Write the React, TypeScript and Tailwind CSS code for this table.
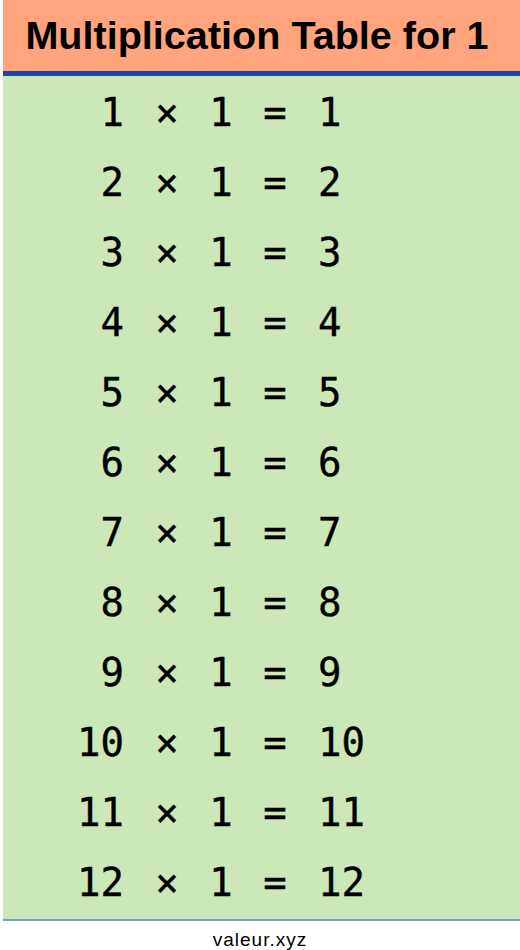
import React from 'react'

const rows = Array.from({ length: 12 }, (_, i) => i + 1)
const factor = 1

export default function App() {
  return (
    <div className="w-[520px] h-[950px] bg-white">
      <div className="ml-[3px]">
        <div className="h-[76px] bg-[#FFA47D] border-b-[5px] border-[#1c4a9e] flex items-center justify-center pr-[9px]">
          <h1 className="text-[39.6px] font-bold text-black leading-none [font-family:'Liberation_Sans',Arial,sans-serif]">
            Multiplication Table for {factor}
          </h1>
        </div>

        <div className="bg-[#CCE7B8] border-b-2 border-[#7d9cc9] pt-[2px] pb-px">
          {rows.map(n => (
            <div
              key={n}
              className="h-[70px] flex items-center text-[39px] text-black [-webkit-text-stroke:0.4px_black] [font-family:'DejaVu_Sans_Mono',monospace]"
            >
              <span className="w-[121px] text-right">{n}</span>
              <span className="w-[86px] text-center">×</span>
              <span className="w-[22px] flex justify-center">{factor}</span>
              <span className="w-[86px] text-center">=</span>
              <span>{n * factor}</span>
            </div>
          ))}
        </div>
      </div>

      <p className="text-center text-[19px] tracking-[1px] leading-none pt-[9px] text-black [font-family:'Liberation_Sans',Arial,sans-serif]">
        valeur.xyz
      </p>
    </div>
  )
}
